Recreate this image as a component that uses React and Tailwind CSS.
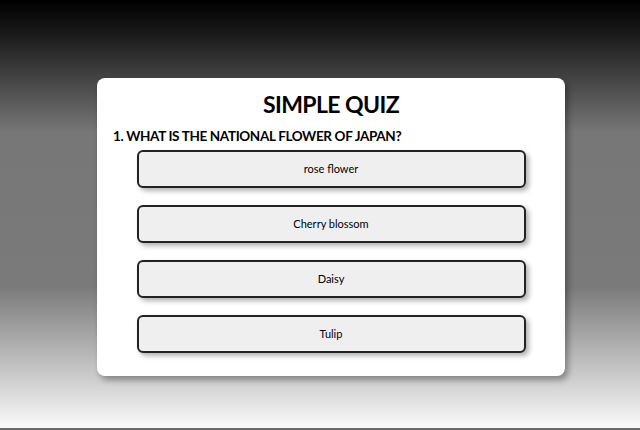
export default function App() {
  const options = ['rose flower', 'Cherry blossom', 'Daisy', 'Tulip'];

  return (
    <div className="h-[430px] w-[640px] bg-[linear-gradient(to_bottom,#000_0%,#1a1a1a_8%,#777_31%,#7a7a7a_67%,#f6f6f6_99%)] border-b-2 border-[#6a6a6a] pt-[78px] pl-[97px] font-['Lato',sans-serif]">
      <div className="w-[468px] h-[298px] bg-white rounded-lg shadow-[3px_4px_6px_rgba(0,0,0,0.35)] px-4 pt-[12px]">
        <h1 className="text-center text-[23px] font-bold text-black leading-[28px] tracking-[-0.6px]">SIMPLE QUIZ</h1>
        <h2 className="mt-[8px] text-[13.5px] font-bold text-black leading-[20px] tracking-[-0.35px]">1. WHAT IS THE NATIONAL FLOWER OF JAPAN?</h2>
        <div className="mt-[4px] flex flex-col gap-[17px] items-center">
          {options.map((opt) => (
            <button
              key={opt}
              className="w-[389px] h-[38px] bg-[#efefef] border-2 border-[#222] rounded-[6px] shadow-[3px_3px_5px_rgba(0,0,0,0.3)] text-[11px] text-black"
            >
              {opt}
            </button>
          ))}
        </div>
      </div>
    </div>
  );
}
